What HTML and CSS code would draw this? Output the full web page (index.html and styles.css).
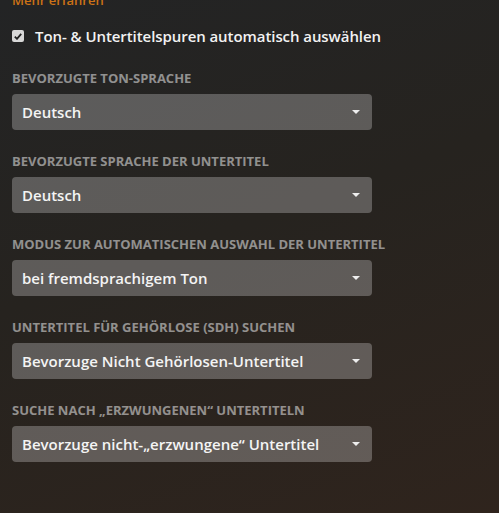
FILE: index.html
```html
<!DOCTYPE html>
<html lang="de">
<head>
<meta charset="utf-8">
<link rel="stylesheet" href="styles.css">
</head>
<body>
<div class="page">
  <a class="learn">Mehr erfahren</a>
  <label class="check">
    <span class="box"><svg width="8" height="7" viewBox="0 0 8 7"><path d="M0.8 3.6 L3 5.8 L7.2 0.8" fill="none" stroke="#222" stroke-width="1.8"/></svg></span>
    <span class="check-text">Ton- &amp; Untertitelspuren automatisch auswählen</span>
  </label>

  <div class="field">
    <div class="label">Bevorzugte Ton-Sprache</div>
    <div class="select"><span>Deutsch</span><i class="arrow"></i></div>
  </div>
  <div class="field">
    <div class="label">Bevorzugte Sprache der Untertitel</div>
    <div class="select"><span>Deutsch</span><i class="arrow"></i></div>
  </div>
  <div class="field">
    <div class="label">Modus zur automatischen Auswahl der Untertitel</div>
    <div class="select"><span>bei fremdsprachigem Ton</span><i class="arrow"></i></div>
  </div>
  <div class="field">
    <div class="label">Untertitel für Gehörlose (SDH) suchen</div>
    <div class="select"><span>Bevorzuge Nicht Gehörlosen-Untertitel</span><i class="arrow"></i></div>
  </div>
  <div class="field">
    <div class="label">Suche nach „erzwungenen“ Untertiteln</div>
    <div class="select"><span>Bevorzuge nicht-„erzwungene“ Untertitel</span><i class="arrow"></i></div>
  </div>
</div>
</body>
</html>
```
FILE: styles.css
```css
html, body {
  margin: 0;
  height: 100%;
}
body {
  background: linear-gradient(160deg, #232425 0%, #26231f 45%, #2f241d 100%);
  font-family: "Open Sans", "Liberation Sans", sans-serif;
  color: #fff;
  overflow: hidden;
}
.page {
  padding: 0 12px;
  width: 360px;
  margin-top: -8px;
}
.learn {
  display: block;
  color: #cc7216;
  font-size: 13px;
  font-weight: 600;
  line-height: 16px;
  height: 16px;
}
.check {
  display: flex;
  align-items: center;
  gap: 11px;
  margin-top: 18px;
  height: 20px;
  white-space: nowrap;
}
.box {
  width: 12px;
  height: 12px;
  border-radius: 2px;
  background: #d8d8d8;
  display: flex;
  align-items: center;
  justify-content: center;
  flex: none;
}
.check-text {
  font-size: 15px;
  font-weight: 600;
  color: #f2f2f2;
  letter-spacing: -0.07px;
}
.field {
  margin-top: 22px;
}
.check + .field {
  margin-top: 23px;
}
.label {
  font-size: 13px;
  font-weight: 700;
  text-transform: uppercase;
  color: rgba(255, 255, 255, 0.5);
  line-height: 18px;
  white-space: nowrap;
}
.select {
  margin-top: 7px;
  height: 36px;
  border-radius: 4px;
  background: rgba(255, 255, 255, 0.26);
  display: flex;
  align-items: center;
  justify-content: space-between;
  padding: 0 12px 0 10px;
  font-size: 15px;
  font-weight: 600;
  color: #f4f4f4;
}
.arrow {
  width: 0;
  height: 0;
  border-left: 4px solid transparent;
  border-right: 4px solid transparent;
  border-top: 4px solid #eee;
}
```
